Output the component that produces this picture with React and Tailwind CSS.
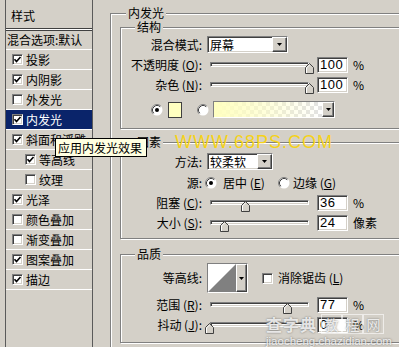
import React from 'react';

const sunken =
  'border border-t-[#808080] border-l-[#808080] border-b-white border-r-white shadow-[inset_1px_1px_0_#404040,inset_-1px_-1px_0_#d4d0c8]';
const raised =
  'border border-t-white border-l-white border-b-[#404040] border-r-[#404040] shadow-[inset_-1px_-1px_0_#808080] bg-[#d4d0c8]';
const etched = 'border border-[#808080] shadow-[inset_1px_1px_0_#fff,1px_1px_0_#fff]';

const styles = [
  { name: '投影', checked: true },
  { name: '内阴影', checked: true },
  { name: '外发光', checked: false },
  { name: '内发光', checked: true, selected: true },
  { name: '斜面和浮雕', checked: true },
  { name: '等高线', checked: true, indent: true },
  { name: '纹理', checked: false, indent: true },
  { name: '光泽', checked: true },
  { name: '颜色叠加', checked: false },
  { name: '渐变叠加', checked: false },
  { name: '图案叠加', checked: true },
  { name: '描边', checked: true },
];

const Check = () => (
  <svg width="9" height="9" viewBox="0 0 9 9">
    <path d="M1.5 4.2 L3.5 6.5 L7.5 2" fill="none" stroke="black" strokeWidth="1.6" />
  </svg>
);

const Checkbox = ({ checked, className = '' }) => (
  <div className={`w-[11px] h-[11px] shrink-0 bg-white flex items-center justify-center ${sunken} ${className}`}>
    {checked && <Check />}
  </div>
);

const Radio = ({ checked, className = '' }) => (
  <svg width="12" height="12" viewBox="0 0 12 12" className={`shrink-0 ${className}`}>
    <circle cx="6" cy="6" r="5.5" fill="#fff" />
    <path d="M2.11 9.89 A5.5 5.5 0 0 1 9.89 2.11" fill="none" stroke="#808080" />
    <path d="M2.82 9.18 A4.5 4.5 0 0 1 9.18 2.82" fill="none" stroke="#404040" />
    {checked && <circle cx="6" cy="6" r="2" fill="#000" />}
  </svg>
);

const Tri = () => (
  <svg width="5" height="3" viewBox="0 0 5 3">
    <path d="M0 0h5L2.5 3z" fill="black" />
  </svg>
);

const DropBtn = ({ className = '' }) => (
  <div className={`h-full shrink-0 flex items-center justify-center ${raised} ${className}`}>
    <Tri />
  </div>
);

const Key = ({ k }) => (
  <>
    (<span className="underline">{k}</span>)
  </>
);

const Legend = ({ className = '', children }) => (
  <div className={`block w-fit -mt-[8px] px-[2px] bg-[#d4d0c8] leading-[14px] ${className}`}>{children}</div>
);

const Row = ({ label, className = '', children }) => (
  <div className={`flex items-center ${className}`}>
    <div className="w-[84px] shrink-0 pr-[3px] text-right whitespace-nowrap leading-[14px]">{label}</div>
    {children}
  </div>
);

const Select = ({ value, className = '' }) => (
  <div className={`ml-[2px] h-[17px] bg-white flex ${sunken} ${className}`}>
    <span className="flex-1 pl-[2px] leading-[15px]">{value}</span>
    <DropBtn className="w-[15px]" />
  </div>
);

const Slider = ({ pos }) => (
  <div className="relative w-[109px] h-[20px] shrink-0">
    <div className={`mx-[5px] mt-[7px] h-[5px] bg-white ${sunken}`} />
    <svg
      width="9"
      height="11"
      viewBox="0 0 9 11"
      className="absolute top-[8px]"
      style={{ left: `${Math.round(pos * 100)}px` }}
    >
      <polygon points="0.5,10.5 0.5,4.5 4.5,0.5 8.5,4.5 8.5,10.5" fill="#d4d0c8" stroke="#404040" />
      <polyline points="1.5,10 1.5,4.9 4.5,1.9" fill="none" stroke="#fff" />
    </svg>
  </div>
);

const NumBox = ({ value }) => (
  <div
    className={`ml-[3px] w-[31px] h-[16px] shrink-0 bg-white pl-[2px] font-['Liberation_Sans',sans-serif] text-[13px] leading-[14px] tracking-[0.5px] ${sunken}`}
  >
    {value}
  </div>
);

const Unit = ({ children }) => <span className="ml-[5px] leading-[14px] whitespace-nowrap">{children}</span>;

const StylePanel = () => (
  <div className="ml-[5px] w-[88px] h-[360px] shrink-0 border-l border-r border-[#5a5a5a]">
    <div className="h-[28px] pl-[5px] pt-[9px] leading-[14px]">样式</div>
    <div className="h-[3px] border-y border-[#404040] bg-white" />
    <div className="h-[19px] pl-[1px] flex items-center border-b border-white whitespace-nowrap">混合选项:默认</div>
    {styles.map((s) => (
      <div
        key={s.name}
        className={`h-[20px] flex items-center border-b border-white whitespace-nowrap ${
          s.indent ? 'pl-[19px]' : 'pl-[6px]'
        } ${s.selected ? 'bg-[#0a246a] text-white' : ''}`}
      >
        <Checkbox checked={s.checked} />
        <span className="ml-[3px] leading-[14px]">{s.name}</span>
      </div>
    ))}
  </div>
);

export default function App() {
  return (
    <div className="relative w-[399px] h-[347px] overflow-hidden bg-[#d4d0c8] flex items-start font-['Noto_Sans_CJK_SC',sans-serif] text-[12px] text-black">
      <StylePanel />

      <div className={`ml-[17px] mt-[13px] w-[320px] shrink-0 pb-[30px] ${etched}`}>
        <Legend className="ml-[15px]">内发光</Legend>

        {/* 结构 */}
        <div className={`ml-[9px] mt-[7px] w-[300px] pb-[10px] ${etched}`}>
          <Legend className="ml-[14px]">结构</Legend>
          <Row label="混合模式:" className="mt-[2px] h-[17px]">
            <Select value="屏幕" className="w-[81px]" />
          </Row>
          <Row
            label={
              <>
                不透明度 <Key k="O" />:
              </>
            }
            className="mt-[2px] h-[20px]"
          >
            <Slider pos={1} />
            <NumBox value="100" />
            <Unit>%</Unit>
          </Row>
          <Row
            label={
              <>
                杂色 <Key k="N" />:
              </>
            }
            className="h-[20px]"
          >
            <Slider pos={1} />
            <NumBox value="100" />
            <Unit>%</Unit>
          </Row>
          <div className="flex items-center mt-[6px] h-[17px]">
            <Radio checked className="ml-[30px]" />
            <div className="ml-[5px] w-[14px] h-[16px] border border-[#404040] bg-[#ffffc0]" />
            <Radio className="ml-[15px]" />
            <div className={`ml-[4px] w-[122px] h-[17px] flex ${sunken}`}>
              <div className="flex-1 bg-[image:linear-gradient(to_right,#ffffc0_0%,rgba(255,255,192,0.6)_45%,rgba(255,255,192,0)_100%),repeating-conic-gradient(#e2e2e2_0%_25%,#ffffff_0%_50%)] bg-[length:100%_100%,8px_8px]" />
              <DropBtn className="w-[12px]" />
            </div>
          </div>
        </div>

        {/* 图素 */}
        <div className={`ml-[9px] mt-[13px] w-[300px] pb-[5px] ${etched}`}>
          <Legend className="ml-[14px]">图素</Legend>
          <Row label="方法:" className="mt-[4px] h-[17px]">
            <Select value="较柔软" className="w-[66px]" />
          </Row>
          <Row label="源:" className="mt-[3px] h-[20px]">
            <Radio checked />
            <span className="ml-[6px] w-[55px] leading-[14px] whitespace-nowrap">
              居中 <Key k="E" />
            </span>
            <Radio />
            <span className="ml-[3px] leading-[14px] whitespace-nowrap">
              边缘 <Key k="G" />
            </span>
          </Row>
          <Row
            label={
              <>
                阻塞 <Key k="C" />:
              </>
            }
            className="h-[20px]"
          >
            <Slider pos={0.36} />
            <NumBox value="36" />
            <Unit>%</Unit>
          </Row>
          <Row
            label={
              <>
                大小 <Key k="S" />:
              </>
            }
            className="h-[20px]"
          >
            <Slider pos={0.15} />
            <NumBox value="24" />
            <Unit>像素</Unit>
          </Row>
        </div>

        {/* 品质 */}
        <div className={`ml-[9px] mt-[15px] w-[300px] pb-[7px] ${etched}`}>
          <Legend className="ml-[14px]">品质</Legend>
          <Row label="等高线:" className="mt-[2px] h-[30px]">
            <div className={`ml-[2px] w-[41px] h-[30px] flex ${sunken}`}>
              <svg width="28" height="28" viewBox="0 0 28 28" className="shrink-0">
                <rect width="28" height="28" fill="#fff" />
                <polygon points="0,28 28,0 28,28" fill="#808080" />
              </svg>
              <DropBtn className="w-[11px]" />
            </div>
            <Checkbox className="ml-[14px]" />
            <span className="ml-[5px] leading-[14px] whitespace-nowrap">
              消除锯齿 <Key k="L" />
            </span>
          </Row>
          <Row
            label={
              <>
                范围 <Key k="R" />:
              </>
            }
            className="mt-[2px] h-[20px]"
          >
            <Slider pos={0.78} />
            <NumBox value="77" />
            <Unit>%</Unit>
          </Row>
          <Row
            label={
              <>
                抖动 <Key k="J" />:
              </>
            }
            className="h-[20px]"
          >
            <Slider pos={0} />
            <NumBox value="0" />
            <Unit>%</Unit>
          </Row>
        </div>
      </div>

      {/* tooltip */}
      <div className="absolute left-[55px] top-[138px] w-[92px] h-[19px] bg-[#ffffe1] border border-black pl-[2px] leading-[17px] whitespace-nowrap">
        应用内发光效果
      </div>

      {/* watermarks */}
      <div className="absolute left-[175px] top-[132px] font-['Liberation_Sans',sans-serif] text-[18px] leading-[20px] tracking-[1px] text-[#f5d21a]">
        WWW.68PS.COM
      </div>
      <div className="absolute left-[266px] top-[314px] flex items-center text-white/80 [text-shadow:0_0_2px_#6b6b6b]">
        <span className="text-[16px] leading-[20px] font-bold tracking-[1px]">查字典</span>
        <div className="ml-[4px] flex">
          {['教', '程', '网'].map((c) => (
            <span
              key={c}
              className="w-[21px] h-[20px] border border-white/60 flex items-center justify-center text-[14px] leading-[16px]"
            >
              {c}
            </span>
          ))}
        </div>
      </div>
      <div className="absolute left-[266px] top-[335px] font-['Liberation_Sans',sans-serif] text-[11.5px] leading-[12px] text-white/85 [text-shadow:0_0_2px_#555]">
        jiaocheng.chazidian.com
      </div>
    </div>
  );
}
